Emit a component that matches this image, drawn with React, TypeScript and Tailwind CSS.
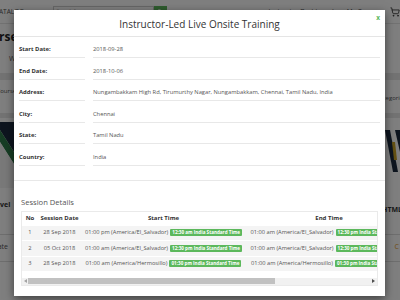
import React from "react";
import { ShoppingCart } from "lucide-react";

const details: [string, string][] = [
  ["Start Date:", "2018-09-28"],
  ["End Date:", "2018-10-06"],
  ["Address:", "Nungambakkam High Rd, Tirumurthy Nagar, Nungambakkam, Chennai, Tamil Nadu, India"],
  ["City:", "Chennai"],
  ["State:", "Tamil Nadu"],
  ["Country:", "India"],
];

const sessions = [
  {
    no: "1",
    date: "28 Sep 2018",
    start: "01:00 pm (America/El_Salvador)",
    startB: "12:30 am India Standard Time",
    end: "01:00 am (America/El_Salvador)",
    endB: "12:30 pm India Standard Time",
  },
  {
    no: "2",
    date: "05 Oct 2018",
    start: "01:00 am (America/El_Salvador)",
    startB: "12:30 pm India Standard Time",
    end: "01:00 am (America/El_Salvador)",
    endB: "12:30 pm India Standard Time",
  },
  {
    no: "3",
    date: "28 Sep 2018",
    start: "01:00 am (America/Hermosillo)",
    startB: "01:30 pm India Standard Time",
    end: "01:00 am (America/Hermosillo)",
    endB: "01:30 pm India Standard Time",
  },
];

function Badge({ children }: { children: React.ReactNode }) {
  return (
    <span className="inline-flex items-center h-[7px] px-[2px] rounded-[1px] bg-[#5cb85c] text-white font-bold text-[4.6px] leading-[7px] whitespace-nowrap">
      {children}
    </span>
  );
}

function Background() {
  return (
    <div className="flex flex-col w-full h-full bg-white text-[#555] whitespace-nowrap">
      {/* navbar */}
      <div className="h-[24px] flex items-center border-b border-[#e5e5e5] text-[6.5px] shrink-0">
        <div className="w-[44px] flex justify-end overflow-hidden">
          <span className="shrink-0">COURSE CATALOG ▾</span>
        </div>
        <div className="ml-[23px] flex h-[12px]">
          <div className="w-[101px] border border-[#ccc] bg-white flex items-center px-[3px] text-[5px] text-[#aaa]">
            Search for courses
          </div>
          <div className="w-[13px] bg-[#5cb85c] flex items-center justify-center">
            <svg width="6" height="6" viewBox="0 0 10 10">
              <circle cx="4" cy="4" r="3" fill="none" stroke="white" strokeWidth="1.5" />
              <path d="M6.5 6.5 L9 9" stroke="white" strokeWidth="1.5" />
            </svg>
          </div>
        </div>
        <div className="ml-[102px] shrink-0">Instructor Dashboard</div>
        <div className="ml-[13px] shrink-0">My Courses</div>
        <ShoppingCart className="ml-[8px] shrink-0 text-[#333]" size={10} />
      </div>
      {/* heading */}
      <div className="h-[25px] flex items-center shrink-0">
        <span className="ml-[-24px] font-bold text-[12px] text-[#222]">Courses</span>
      </div>
      <div className="h-[20px] flex items-center shrink-0">
        <span className="ml-[9px] text-[7px]">We offer</span>
      </div>
      <div className="h-[4px] shrink-0" />
      <div className="h-[7px] bg-[#e6e6e6] shrink-0" />
      <div className="h-[33px] flex justify-between shrink-0 text-[6px]">
        <span className="mt-[7px] ml-[-12px]">All Courses</span>
        <span className="mt-[14px] mr-[-6px]">Categories</span>
      </div>
      <div className="h-[5px] bg-[#e6e6e6] shrink-0" />
      <div className="h-[4px] shrink-0" />
      <div className="h-[66px] flex justify-between shrink-0">
        <svg width="14" height="66" viewBox="0 0 14 66">
          <polygon points="0,0 14,0 14,30 0,8" fill="#1c2b3f" />
          <polygon points="0,8 14,30 14,42 0,20" fill="#2f7a4a" />
          <polygon points="0,20 14,42 14,66 0,66" fill="#f2f2f2" />
        </svg>
        <svg width="15" height="66" viewBox="0 0 15 66">
          <polygon points="0,8 5,8 13,50 8,50" fill="#1c2b3f" />
          <polygon points="7,20 10,20 12,38 9,38" fill="#c9a227" />
          <polygon points="10,8 15,8 15,30" fill="#1c2b3f" />
        </svg>
      </div>
      <div className="h-[40px] flex justify-between items-center shrink-0 font-bold text-[7px] text-[#333]">
        <span className="ml-[-8px] -mt-[6px]">Level</span>
        <span className="mr-[-6px] mt-[4px]">HTML5</span>
      </div>
      <div className="h-[7px] border-b border-[#ddd] shrink-0" />
      <div className="h-[24px] flex justify-between items-center shrink-0 text-[7px]">
        <span className="ml-[-16px]">Update</span>
        <span className="text-[#e39b2b] mr-[1px]">C</span>
      </div>
      <div className="h-[3px] border-b border-[#ddd] shrink-0" />
    </div>
  );
}

export default function App() {
  return (
    <div className="relative w-[400px] h-[300px] overflow-hidden font-['Open_Sans',sans-serif]">
      <Background />
      <div className="absolute inset-0 bg-black/50" />
      <div className="absolute left-[14px] top-[10px] w-[371px] h-[286px] bg-white shadow-[0_3px_9px_rgba(0,0,0,0.5)] flex flex-col">
        {/* header */}
        <div className="relative h-[26.5px] shrink-0 border-b border-[#e5e5e5] flex items-center justify-center">
          <span className="text-[10px] leading-[14px] pt-[2px] text-[#333]">Instructor-Led Live Onsite Training</span>
          <span className="absolute right-[5px] top-[3px] text-[6.5px] font-bold text-[#5cb85c]">x</span>
        </div>
        {/* details */}
        <div className="px-[5px] flex flex-col shrink-0">
          {details.map(([k, v]) => (
            <div key={k} className="flex gap-[8px] h-[21.5px]">
              <div className="w-[66px] border-b border-[#e8e8e8] flex items-end pb-[3px] text-[5.9px] leading-[10px] font-bold text-[#333]">
                {k}
              </div>
              <div className="flex-1 border-b border-[#e8e8e8] flex items-end pb-[3px] text-[5.75px] leading-[10px] text-[#555] whitespace-nowrap">
                {v}
              </div>
            </div>
          ))}
        </div>
        <div className="mt-[14px] border-b border-[#e8e8e8] shrink-0" />
        {/* sessions */}
        <div className="px-[7px] flex flex-col">
          <div className="mt-[16.5px] text-[7.6px] leading-[11px] text-[#555] mb-[2.5px]">Session Details</div>
          <div className="border border-[#eaeaea] flex flex-col overflow-hidden">
            <div className="w-[495px] grid grid-cols-[16px_43px_165px_166px_105px] h-[13px] items-center text-[6px] font-bold text-[#333] text-center whitespace-nowrap">
              <div>No</div>
              <div>Session Date</div>
              <div>Start Time</div>
              <div>End Time</div>
              <div>Venue</div>
            </div>
            {sessions.map((s) => (
              <div
                key={s.no}
                className="w-[495px] grid grid-cols-[16px_43px_165px_166px_105px] h-[15.5px] items-center border-t border-white bg-[#f4f4f4] text-[5.7px] text-[#555] text-center whitespace-nowrap"
              >
                <div>{s.no}</div>
                <div>{s.date}</div>
                <div className="flex items-center justify-center gap-[2px]">
                  <span>{s.start}</span>
                  <Badge>{s.startB}</Badge>
                </div>
                <div className="flex items-center justify-center gap-[2px]">
                  <span>{s.end}</span>
                  <Badge>{s.endB}</Badge>
                </div>
                <div>Chennai</div>
              </div>
            ))}
            <div className="h-[6.5px]" />
            {/* scrollbar */}
            <div className="h-[7px] bg-[#f1f1f1] flex items-center">
              <div className="w-[6px] flex justify-center">
                <svg width="3" height="4" viewBox="0 0 3 4">
                  <polygon points="3,0 0,2 3,4" fill="#a3a3a3" />
                </svg>
              </div>
              <div className="w-[247px] h-[5.5px] bg-[#c1c1c1]" />
              <div className="flex-1" />
              <div className="w-[8px] flex justify-center">
                <svg width="3" height="4" viewBox="0 0 3 4">
                  <polygon points="0,0 3,2 0,4" fill="#505050" />
                </svg>
              </div>
            </div>
          </div>
        </div>
      </div>
    </div>
  );
}
